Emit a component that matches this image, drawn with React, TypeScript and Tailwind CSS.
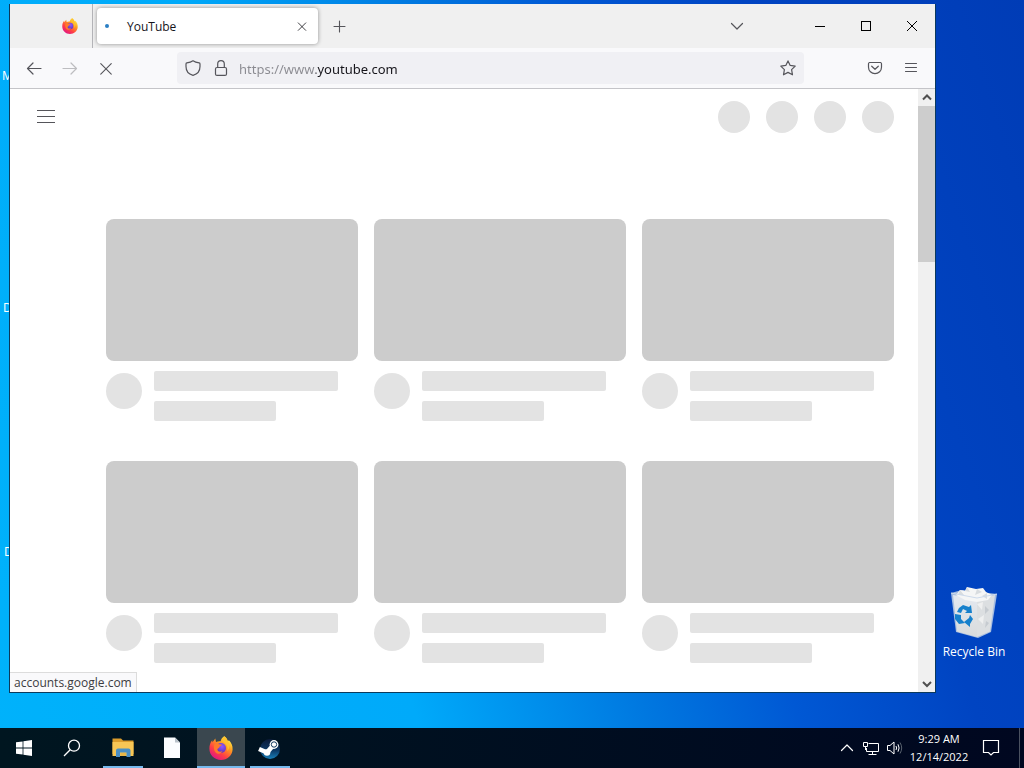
import React from 'react';

interface IconProps {
  className?: string;
}

interface TaskItem {
  name: string;
  icon: React.FC<IconProps>;
  state: 'idle' | 'running' | 'active';
}

interface DesktopLabel {
  text: string;
  className: string;
}

const stroke = {
  fill: 'none',
  stroke: 'currentColor',
  strokeLinecap: 'round' as const,
  strokeLinejoin: 'round' as const,
};

const BackIcon: React.FC<IconProps> = ({ className }) => (
  <svg viewBox="0 0 16 16" className={className} {...stroke} strokeWidth="1.2">
    <path d="M15 8.500H1.500M7 3 1.500 8.500 7 14" />
  </svg>
);

const ForwardIcon: React.FC<IconProps> = ({ className }) => (
  <svg viewBox="0 0 16 16" className={className} {...stroke} strokeWidth="1.2">
    <path d="M1 8.500H14.500M9 3 14.500 8.500 9 14" />
  </svg>
);

const CloseIcon: React.FC<IconProps> = ({ className }) => (
  <svg viewBox="0 0 16 16" className={className} {...stroke} strokeWidth="1.3">
    <path d="M2 3 14 15M14 3 2 15" />
  </svg>
);

const PlusIcon: React.FC<IconProps> = ({ className }) => (
  <svg viewBox="0 0 16 16" className={className} {...stroke} strokeWidth="1.1">
    <path d="M8.500 3V14M3 8.500H14" />
  </svg>
);

const ChevronIcon: React.FC<IconProps> = ({ className }) => (
  <svg viewBox="0 0 16 16" className={className} {...stroke} strokeWidth="1.2">
    <path d="M2.500 5.500 8 11 13.500 5.500" />
  </svg>
);

const ShieldIcon: React.FC<IconProps> = ({ className }) => (
  <svg viewBox="0 0 16 16" className={className} {...stroke} strokeWidth="1.2">
    <path d="M8 .8C6.4 1.9 4.2 2.6 1.8 2.9 1.3 3 1 3.400 1 3.900V6.500C1 10.600 3.700 14.200 8 15.300 12.300 14.200 15 10.600 15 6.500V3.900C15 3.400 14.700 3 14.200 2.900 11.800 2.600 9.600 1.900 8 .8Z" />
  </svg>
);

const LockIcon: React.FC<IconProps> = ({ className }) => (
  <svg viewBox="0 0 16 16" className={className} {...stroke} strokeWidth="1.2">
    <rect x="2.500" y="7.500" width="11" height="7.900" rx="1.500" />
    <path d="M4.700 7.500V4A3.300 3.300 0 0 1 11.300 4V7.500" />
  </svg>
);

const StarIcon: React.FC<IconProps> = ({ className }) => (
  <svg viewBox="0 0 16 16" className={className} {...stroke} strokeWidth="1.2">
    <path d="M8 .9 10.200 5.400 15.200 6.100 11.600 9.600 12.500 14.800 8 12.400 3.500 14.800 4.400 9.600 .8 6.100 5.800 5.400Z" />
  </svg>
);

const PocketIcon: React.FC<IconProps> = ({ className }) => (
  <svg viewBox="0 0 16 16" className={className} {...stroke} strokeWidth="1.2">
    <path d="M2.500 2.500H13.500A1.300 1.300 0 0 1 14.500 3.800V7.200A6.500 6.500 0 0 1 1.500 7.200V3.800A1.300 1.300 0 0 1 2.500 2.500Z" />
    <path d="M4.700 6.200 8 9.300 11.300 6.200" />
  </svg>
);

const MenuIcon: React.FC<IconProps> = ({ className }) => (
  <svg viewBox="0 0 16 16" className={className} {...stroke} strokeWidth="1.100">
    <path d="M2.500 3.500H13.500M2.500 7.500H13.500M2.500 11.500H13.500" />
  </svg>
);

const GuideIcon: React.FC<IconProps> = ({ className }) => (
  <svg viewBox="0 0 18 14" className={className} shapeRendering="crispEdges" fill="currentColor">
    <path d="M0 0H18V1H0ZM0 6H18V7H0ZM0 12H18V13H0Z" />
  </svg>
);

const FirefoxIcon: React.FC<IconProps> = ({ className }) => (
  <svg viewBox="0 0 24 24" className={className}>
    <defs>
      <linearGradient id="fox" x1="0.85" y1="0.1" x2="0.25" y2="0.95">
        <stop offset="0" stopColor="#fff04a" />
        <stop offset="0.35" stopColor="#ff9a20" />
        <stop offset="0.7" stopColor="#ff3f45" />
        <stop offset="1" stopColor="#e2187f" />
      </linearGradient>
      <radialGradient id="globe" cx="0.6" cy="0.35" r="0.7">
        <stop offset="0" stopColor="#9059ff" />
        <stop offset="1" stopColor="#5b2fb4" />
      </radialGradient>
    </defs>
    <path
      fill="url(#fox)"
      d="M15.200.2C18 2 18.500 4 18.800 5.200L19.900 4.300C22.500 6.700 23.800 10 23.600 13.400 23.200 19.300 18.200 23.900 12 23.900 5.500 23.900.4 19 .4 12.700.4 9.400 1.200 6.500 3.200 4.200L3.500 6.200 6.300 2.600 7 6C8.500 5.200 10 5 11.600 5.200 12.100 3 13.300 1.200 15.200.2Z"
    />
    <circle cx="12" cy="12" r="5" fill="url(#globe)" />
    <path
      fill="#ff7a2a"
      d="M5.400 8.200C7 6.900 9 7.300 10 8.300L12.800 8.600C12.800 9.900 11.200 10.300 10.500 10.700 10.200 12.600 8.500 12 8.400 13.800 8.900 15.800 11.500 16.200 13.500 15 12.700 17 10.500 18.200 8.300 17.500 5.300 16.400 4.100 11.500 5.400 8.200Z"
    />
    <path fill="#ffc12d" d="M15.200.2C13 3.200 14 5.100 16 6.900 18.400 9.100 19.200 11.800 18.200 15 20.800 12.500 21 8.300 18.800 5.200 18.200 3.200 17.200 1.500 15.200.2Z" />
  </svg>
);

const WindowsIcon: React.FC<IconProps> = ({ className }) => (
  <svg viewBox="0 0 16 16" className={className} fill="#fff">
    <path d="M0 2.300 6.600 1.400V7.600H0ZM7.400 1.300 16 0V7.600H7.400ZM0 8.400H6.600V14.600L0 13.700ZM7.400 8.400H16V16L7.400 14.700Z" />
  </svg>
);

const SearchIcon: React.FC<IconProps> = ({ className }) => (
  <svg viewBox="0 0 18 18" className={className} fill="none" stroke="#fff" strokeWidth="1.300">
    <circle cx="11" cy="6.700" r="5.500" />
    <path d="M7.200 10.800 1 17" />
  </svg>
);

const FolderIcon: React.FC<IconProps> = ({ className }) => (
  <svg viewBox="0 0 24 24" className={className}>
    <path fill="#dc9d2c" d="M1.500 2.500H10L12 4.500H22.500V18H1.500Z" />
    <path fill="#f7c655" d="M1.500 6H22.500V20H1.500Z" />
    <path fill="#4a8fc4" d="M5 21V14.500Q5 12.500 7 12.500H17.500Q19.500 12.500 19.500 14.500V21H15.500V16.500H9V21Z" />
    <path fill="#e9b748" d="M9.500 17H15V20H9.500Z" />
  </svg>
);

const FileIcon: React.FC<IconProps> = ({ className }) => (
  <svg viewBox="0 0 24 24" className={className}>
    <path fill="#fbfdff" d="M4 1.500H15L20 6.500V22H4Z" />
    <path fill="#b9c2ca" d="M15 1.500 20 6.500H15Z" />
  </svg>
);

const SteamIcon: React.FC<IconProps> = ({ className }) => (
  <svg viewBox="0 0 24 24" className={className}>
    <defs>
      <linearGradient id="steam" x1="0" y1="0" x2="0" y2="1">
        <stop offset="0" stopColor="#0b1a38" />
        <stop offset="0.55" stopColor="#0c3764" />
        <stop offset="1" stopColor="#1880ba" />
      </linearGradient>
    </defs>
    <circle cx="12" cy="13" r="10" fill="url(#steam)" />
    <path stroke="#fff" strokeWidth="4.600" strokeLinecap="round" d="M9 16.500 15 9.500" />
    <path stroke="#fff" strokeWidth="4.500" d="M1 13 9 16.500" />
    <circle cx="9" cy="16.500" r="3.300" fill="#fff" />
    <circle cx="16" cy="8.500" r="4.400" fill="#fff" />
    <circle cx="16" cy="8.500" r="2.700" fill="#fff" stroke="#12385f" strokeWidth="1" />
  </svg>
);

const NetworkIcon: React.FC<IconProps> = ({ className }) => (
  <svg viewBox="0 0 18 16" className={className} fill="none" stroke="#fff">
    <path d="M6.500 3.500H16.500V11.500H4.500V8M10.500 11.500V14.500M6.500 14.500H14.500" />
    <path d="M1.500 2.500H5.500V6.500H1.500ZM3.500 6.500V10" />
  </svg>
);

const SpeakerIcon: React.FC<IconProps> = ({ className }) => (
  <svg viewBox="0 0 18 16" className={className} fill="none" stroke="#fff">
    <path d="M1.500 5.500H4L8 2V14L4 10.500H1.500Z" />
    <path d="M10 6Q11.200 8 10 10M12 4.300Q14.200 8 12 11.700" />
    <path d="M14 2.500Q17.400 8 14 13.500" stroke="#59626e" />
  </svg>
);

const NotificationIcon: React.FC<IconProps> = ({ className }) => (
  <svg viewBox="0 0 18 18" className={className} fill="none" stroke="#fff" strokeWidth="1.200">
    <path d="M1.500 1.500H16.500V13.500H11.500L9 16 6.500 13.500H1.500Z" />
  </svg>
);

const RecycleBinIcon: React.FC<IconProps> = ({ className }) => (
  <svg viewBox="0 0 48 52" className={className}>
    <defs>
      <linearGradient id="binFront" x1="0" y1="0" x2="0" y2="1">
        <stop offset="0" stopColor="#e4e9f0" />
        <stop offset="1" stopColor="#d9dbdc" />
      </linearGradient>
    </defs>
    <path fill="#a6bde0" d="M1 7 12 4 47 8 41 46 28 52 6 46Z" />
    <path fill="url(#binFront)" d="M3 9 27 13 27 51 7 45.500Z" />
    <path fill="#dcdfe1" d="M27 13 45 9 40 45.500 27 51Z" />
    <path fill="#f5f6f6" d="M6 9 10 4 15 5 17 1 26 3 33 2 36 6 42 9 38 14 27 16 15 14Z" />
    <path fill="#d8dcdf" d="M17 1 20 6 15 5ZM27 3 25 9 32 6ZM10 4 14 9 8 9ZM37 7 32 10 37 13Z" />
    <path fill="#c6cbd0" d="M35 20 39 24 35 28ZM36 35 39 37 35 42Z" />
    <path fill="#eff0f0" d="M27 18 33 16 32 24ZM28 33 34 29 33 38Z" />
    <path fill="none" stroke="#cddaeb" strokeWidth="1" d="M1 7 27 12 47 8" />
    <g fill="#1680cc">
      <path d="M9 22 13 19 19 21 21 19 22 27 15 27 17 25 13 23 11 27 7 26Z" />
      <path d="M5 28 11 29 11 33 15 37 9 38 5 33Z" />
      <path d="M20 29 23 33 20 38 20 41 14 36 19 32Z" />
    </g>
  </svg>
);

const taskItems: TaskItem[] = [
  { name: 'File Explorer', icon: FolderIcon, state: 'running' },
  { name: 'Document', icon: FileIcon, state: 'idle' },
  { name: 'Firefox', icon: FirefoxIcon, state: 'active' },
  { name: 'Steam', icon: SteamIcon, state: 'running' },
];

const taskStyles = {
  idle: 'border-transparent',
  running: 'border-[#76b9ed]',
  active: 'border-[#76b9ed]',
};

const desktopLabels: DesktopLabel[] = [
  { text: 'M', className: 'left-0.5 top-17' },
  { text: 'D', className: 'left-[3px] top-75' },
  { text: 'D', className: 'left-1 top-136' },
];

const TabStrip: React.FC = () => (
  <div className="flex h-11 bg-[#f0f0f0] text-[#15141a]">
    <div className="flex w-[83px] items-center justify-end border-r border-[#b4b4b8] pr-3.5">
      <FirefoxIcon className="size-4" />
    </div>
    <div className="mb-1 ml-1 mt-1 flex w-[221px] items-center rounded bg-white px-2 shadow-[0_0_4px_rgba(0,0,0,0.4)]">
      <span className="size-1 rounded-full bg-[#2b7fc4]" />
      <span className="ml-[18px] flex-1 pt-0.5 text-xs text-[#15141a]">YouTube</span>
      <button aria-label="Close tab" className="flex size-4 items-center justify-center">
        <CloseIcon className="size-2.5" />
      </button>
    </div>
    <button aria-label="New tab" className="flex w-[42px] items-center justify-center text-[#55555a]">
      <PlusIcon className="size-4" />
    </button>
    <div className="flex-1" />
    <button aria-label="List all tabs" className="mr-10 flex w-10 items-center justify-center text-[#55555a]">
      <ChevronIcon className="size-4" />
    </button>
    <button aria-label="Minimize" className="flex w-[46px] items-center justify-center">
      <span className="h-px w-2.5 bg-black" />
    </button>
    <button aria-label="Maximize" className="flex w-[46px] items-center justify-center">
      <span className="size-2.5 border border-black" />
    </button>
    <button aria-label="Close" className="flex w-[46px] items-center justify-center text-black">
      <svg viewBox="0 0 10 10" className="size-2.5" fill="none" stroke="currentColor">
        <path d="M0 0 10 10M10 0 0 10" />
      </svg>
    </button>
  </div>
);

const Toolbar: React.FC = () => (
  <div className="flex h-[41px] items-center border-b border-[#c4c4c8] bg-[#f9f9fb] px-1.5 text-[#55555b]">
    <button aria-label="Back" className="flex size-9 items-center justify-center">
      <BackIcon className="size-4" />
    </button>
    <button aria-label="Forward" className="flex size-9 items-center justify-center text-[#bdbdc0]" disabled>
      <ForwardIcon className="size-4" />
    </button>
    <button aria-label="Stop" className="flex size-9 items-center justify-center">
      <CloseIcon className="size-3.5" />
    </button>
    <div className="mx-[53px] flex h-8 flex-1 items-center rounded bg-[#f0f0f4] px-2">
      <ShieldIcon className="size-4" />
      <LockIcon className="ml-3 size-4" />
      <input
        aria-label="Address"
        defaultValue="https://www.youtube.com"
        className="ml-2.5 min-w-0 flex-1 bg-[linear-gradient(to_right,#8a8a90_77px,#15141a_77px)] bg-clip-text pt-[3px] font-['Noto_Sans',sans-serif] text-[13px] text-transparent outline-none"
      />
      <button aria-label="Bookmark this page">
        <StarIcon className="size-4" />
      </button>
    </div>
    <button aria-label="Save to Pocket" className="flex size-9 items-center justify-center">
      <PocketIcon className="size-4" />
    </button>
    <button aria-label="Open application menu" className="flex size-9 items-center justify-center">
      <MenuIcon className="size-4" />
    </button>
  </div>
);

const VideoPlaceholder: React.FC = () => (
  <div>
    <div className="aspect-video rounded-lg bg-[#ccc]" />
    <div className="mt-2.5 flex gap-3">
      <div className="mt-0.5 size-9 shrink-0 rounded-full bg-[#e3e3e3]" />
      <div className="flex flex-1 flex-col gap-2.5">
        <div className="h-5 w-[90%] rounded-xs bg-[#e3e3e3]" />
        <div className="h-5 w-[60%] rounded-xs bg-[#e3e3e3]" />
      </div>
    </div>
  </div>
);

const Page: React.FC = () => (
  <div className="relative flex flex-1 bg-white">
    <div className="flex-1">
      <header className="flex h-14 items-center justify-between pl-[27px] pr-6">
        <button aria-label="Guide" className="text-[#55555a]">
          <GuideIcon className="h-3.5 w-[18px]" />
        </button>
        <div className="flex gap-4">
          {[0, 1, 2, 3].map((i) => (
            <div key={i} className="size-8 rounded-full bg-[#e3e3e3]" />
          ))}
        </div>
      </header>
      <div className="grid grid-cols-3 gap-x-4 gap-y-10 pb-7 pl-24 pr-6 pt-[74px]">
        {[0, 1, 2, 3, 4, 5].map((i) => (
          <VideoPlaceholder key={i} />
        ))}
      </div>
    </div>

    {/* Scrollbar */}
    <div className="flex w-[17px] flex-col bg-[#f0f0f0] text-[#505050]">
      <button aria-label="Scroll up" className="flex h-[17px] items-center justify-center">
        <svg viewBox="0 0 10 10" className="size-2.5" fill="none" stroke="currentColor" strokeWidth="2">
          <path d="M1 6.500 5 2.500 9 6.500" />
        </svg>
      </button>
      <div className="flex-1">
        <div className="h-39 bg-[#cdcdcd]" />
      </div>
      <button aria-label="Scroll down" className="flex h-[17px] items-center justify-center">
        <svg viewBox="0 0 10 10" className="size-2.5" fill="none" stroke="currentColor" strokeWidth="2">
          <path d="M1 3 5 7 9 3" />
        </svg>
      </button>
    </div>

    {/* Link status */}
    <div className="absolute bottom-0 left-0 h-5 border-r border-t border-[#dcdcdc] bg-[#f9f9fb] px-1 text-xs leading-5 text-[#3c3c42]">
      accounts.google.com
    </div>
  </div>
);

const Taskbar: React.FC = () => (
  <footer className="flex h-10 bg-linear-to-r from-[#001620] to-[#000720] text-white">
    <button aria-label="Start" className="flex w-12 items-center justify-center">
      <WindowsIcon className="size-4" />
    </button>
    <button aria-label="Search" className="flex w-12 items-center justify-center">
      <SearchIcon className="size-[18px]" />
    </button>
    <div className="ml-[3px] flex gap-px">
      {taskItems.map(({ name, icon: Icon, state }) => (
        <button
          key={name}
          aria-label={name}
          className={`flex w-12 justify-center ${state === 'active' ? 'bg-[#3a474f]' : 'px-1'}`}
        >
          <span className={`flex h-10 w-full items-center justify-center border-b-2 pt-0.5 ${taskStyles[state]}`}>
            <Icon className="size-6" />
          </span>
        </button>
      ))}
    </div>
    <div className="flex-1" />
    <button aria-label="Show hidden icons" className="flex w-6 items-center justify-center">
      <ChevronIcon className="size-4 rotate-180" />
    </button>
    <button aria-label="Network" className="flex w-6 items-center justify-center">
      <NetworkIcon className="h-4 w-[18px]" />
    </button>
    <button aria-label="Volume" className="flex w-6 items-center justify-center">
      <SpeakerIcon className="h-4 w-[18px]" />
    </button>
    <button className="w-16 py-0.5 text-center text-[11px] leading-[18px]">
      <span className="block">9:29 AM</span>
      <span className="block">12/14/2022</span>
    </button>
    <button aria-label="Notifications" className="flex w-10 items-center justify-center">
      <NotificationIcon className="size-[18px]" />
    </button>
    <button aria-label="Show desktop" className="ml-2 w-[5px] border-l border-[#4a5160]" />
  </footer>
);

const App: React.FC = () => {
  return (
    <div className="flex min-h-screen flex-col bg-[linear-gradient(72deg,#00b2fb_0%,#00aafa_34%,#0078e0_52%,#0058d4_64%,#0044c2_78%,#003cb6_100%)] font-['Open_Sans',sans-serif]">
      <main className="relative flex flex-1 overflow-hidden pb-[35px] pl-[9px] pt-1">
        {desktopLabels.map((label, index) => (
          <span key={index} className={`absolute text-xs text-white ${label.className}`}>
            {label.text}
          </span>
        ))}

        {/* Browser window */}
        <section className="relative flex flex-1 flex-col border-x border-b border-[#0b3a5c] bg-white">
          <TabStrip />
          <Toolbar />
          <Page />
        </section>

        {/* Desktop icon */}
        <aside className="mr-3 flex w-[76px] flex-col justify-end pb-[33px]">
          <button className="flex flex-col items-center gap-1.5 text-xs text-white">
            <RecycleBinIcon className="h-[52px] w-12" />
            Recycle Bin
          </button>
        </aside>
      </main>
      <Taskbar />
    </div>
  );
};

export default App;
